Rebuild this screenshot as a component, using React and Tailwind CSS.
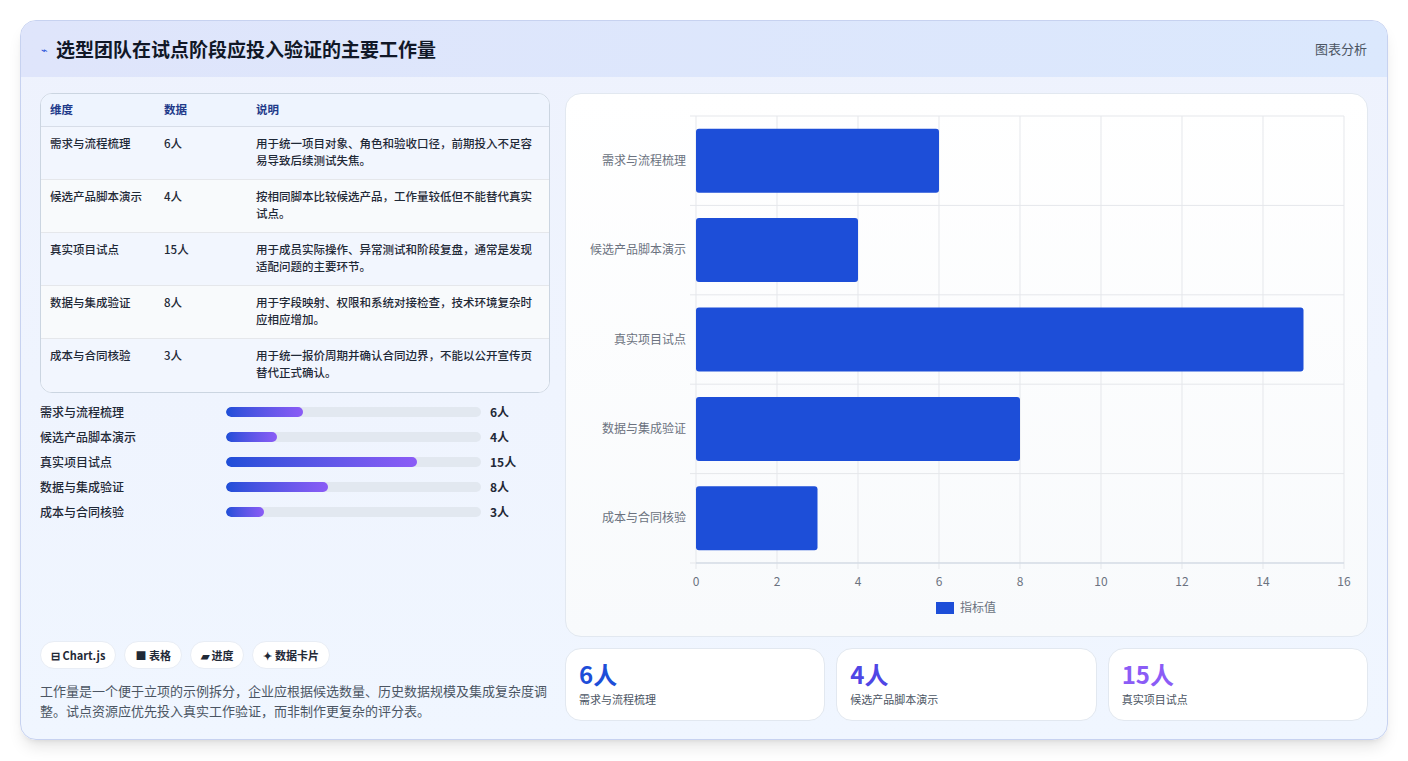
import React from "react";

const rows = [
  ["需求与流程梳理", 6, "用于统一项目对象、角色和验收口径，前期投入不足容易导致后续测试失焦。"],
  ["候选产品脚本演示", 4, "按相同脚本比较候选产品，工作量较低但不能替代真实试点。"],
  ["真实项目试点", 15, "用于成员实际操作、异常测试和阶段复盘，通常是发现适配问题的主要环节。"],
  ["数据与集成验证", 8, "用于字段映射、权限和系统对接检查，技术环境复杂时应相应增加。"],
  ["成本与合同核验", 3, "用于统一报价周期并确认合同边界，不能以公开宣传页替代正式确认。"],
];

function Chart() {
  const x0 = 130, x1 = 778, y0 = 22, y1 = 469;
  const sx = (v) => x0 + ((x1 - x0) * v) / 16;
  const band = (y1 - y0) / 5;
  return (
    <svg width="801" height="543" className="block">
      {[0, 2, 4, 6, 8, 10, 12, 14, 16].map((v) => (
        <g key={v}>
          <line x1={sx(v)} x2={sx(v)} y1={y0} y2={y1 + 6} stroke="#e5e7eb" />
          <text x={sx(v)} y={492} textAnchor="middle" fontSize="12" fill="#6b7280">{v}</text>
        </g>
      ))}
      {[0, 1, 2, 3, 4, 5].map((i) => (
        <line key={i} x1={x0 - 6} x2={x1} y1={y0 + band * i} y2={y0 + band * i} stroke="#e5e7eb" />
      ))}
      <line x1={x0} x2={x1} y1={y1} y2={y1} stroke="#cbd5e1" />
      {rows.map((r, i) => {
        const cy = y0 + band * i + band / 2;
        return (
          <g key={i}>
            <rect x={x0} y={cy - 32} width={sx(r[1]) - x0} height={64} rx="3" fill="#1d4ed8" />
            <text x={x0 - 10} y={cy + 4} textAnchor="end" fontSize="12" fill="#6b7280">{r[0]}</text>
          </g>
        );
      })}
      <rect x="370" y="508" width="18" height="12" fill="#1d4ed8" />
      <text x="394" y="518" fontSize="12" fill="#6b7280">指标值</text>
    </svg>
  );
}

export default function App() {
  return (
    <div className="w-[1408px] h-[761px] bg-white p-5 pb-0" style={{ fontFamily: '"Noto Sans CJK SC", "Noto Sans", sans-serif' }}>
      <div className="h-[720px] rounded-2xl border border-[#c7d2f0] bg-gradient-to-b from-[#eef2fd] to-[#f0f6ff] shadow-lg overflow-hidden flex flex-col">
        <div className="h-[56px] shrink-0 bg-gradient-to-r from-[#dfe5fb] to-[#dbe8fd] flex items-center justify-between px-5">
          <div className="flex items-center gap-2">
            <span className="text-[#1d4ed8] text-[11px]">⌁</span>
            <span className="text-[19px] font-bold text-[#111827]">选型团队在试点阶段应投入验证的主要工作量</span>
          </div>
          <span className="text-[13px] text-[#4b5563]">图表分析</span>
        </div>
        <div className="flex-1 flex gap-[15px] px-[19px] pt-4 pb-[19px]">
          <div className="w-[513px] flex flex-col">
            <div className="rounded-xl border border-[#cbd5e1] overflow-hidden bg-white text-[11.5px]">
              <div className="flex h-[33px] items-center bg-[#eef4fe] border-b border-[#d7dde8] text-[#1e3a8a] font-semibold">
                <div className="w-[123px] pl-[9px]">维度</div>
                <div className="w-[92px]">数据</div>
                <div>说明</div>
              </div>
              {rows.map((r, i) => (
                <div key={i} className={`flex h-[53px] pt-[8px] text-[#1f2937] ${i % 2 ? "bg-[#f8fafc]" : "bg-[#f2f6fe]"} ${i < 4 ? "border-b border-[#e5e7eb]" : ""}`}>
                  <div className="w-[123px] pl-[9px] font-medium">{r[0]}</div>
                  <div className="w-[92px] font-medium">{r[1]}人</div>
                  <div className="flex-1 pr-2 leading-[17px] font-medium">{r[2]}</div>
                </div>
              ))}
            </div>
            <div className="mt-[10px] flex flex-col gap-[7px]">
              {rows.map((r, i) => (
                <div key={i} className="flex items-center h-[18px] text-[12px] text-[#1f2937] font-medium">
                  <div className="w-[186px]">{r[0]}</div>
                  <div className="w-[255px] h-[10px] rounded-full bg-[#e2e8f0] overflow-hidden">
                    <div className="h-full rounded-full bg-gradient-to-r from-[#1d4ed8] to-[#8b5cf6]" style={{ width: `${(r[1] / 20) * 100}%` }} />
                  </div>
                  <div className="ml-[9px] font-bold">{r[1]}人</div>
                </div>
              ))}
            </div>
            <div className="mt-auto">
              <div className="flex gap-[8px] mb-[12px]">
                {["⊟ Chart.js", "■ 表格", "▰ 进度", "✦ 数据卡片"].map((t) => (
                  <span key={t} className="h-[28px] px-[10px] rounded-full bg-white border border-[#e8edf5] text-[11px] font-semibold text-[#1f2937] flex items-center">{t}</span>
                ))}
              </div>
              <p className="text-[13px] leading-[20px] text-[#4b5563]">工作量是一个便于立项的示例拆分，企业应根据候选数量、历史数据规模及集成复杂度调整。试点资源应优先投入真实工作验证，而非制作更复杂的评分表。</p>
            </div>
          </div>
          <div className="flex-1 flex flex-col gap-[11px]">
            <div className="h-[544px] rounded-2xl border border-[#e2e8f0] bg-gradient-to-b from-white to-[#f8fafc] overflow-hidden">
              <Chart />
            </div>
            <div className="grid grid-cols-3 gap-[11px]">
              {[[6, "需求与流程梳理", "text-[#1d4ed8]"], [4, "候选产品脚本演示", "text-[#4f46e5]"], [15, "真实项目试点", "text-[#8b5cf6]"]].map(([v, l, c]) => (
                <div key={l} className="h-[73px] rounded-2xl border border-[#e2e8f0] bg-white px-[13px] pt-[10px]">
                  <div className={`text-[24px] font-bold leading-[30px] ${c}`}>{v}人</div>
                  <div className="text-[11px] text-[#4b5563] mt-[2px]">{l}</div>
                </div>
              ))}
            </div>
          </div>
        </div>
      </div>
    </div>
  );
}
